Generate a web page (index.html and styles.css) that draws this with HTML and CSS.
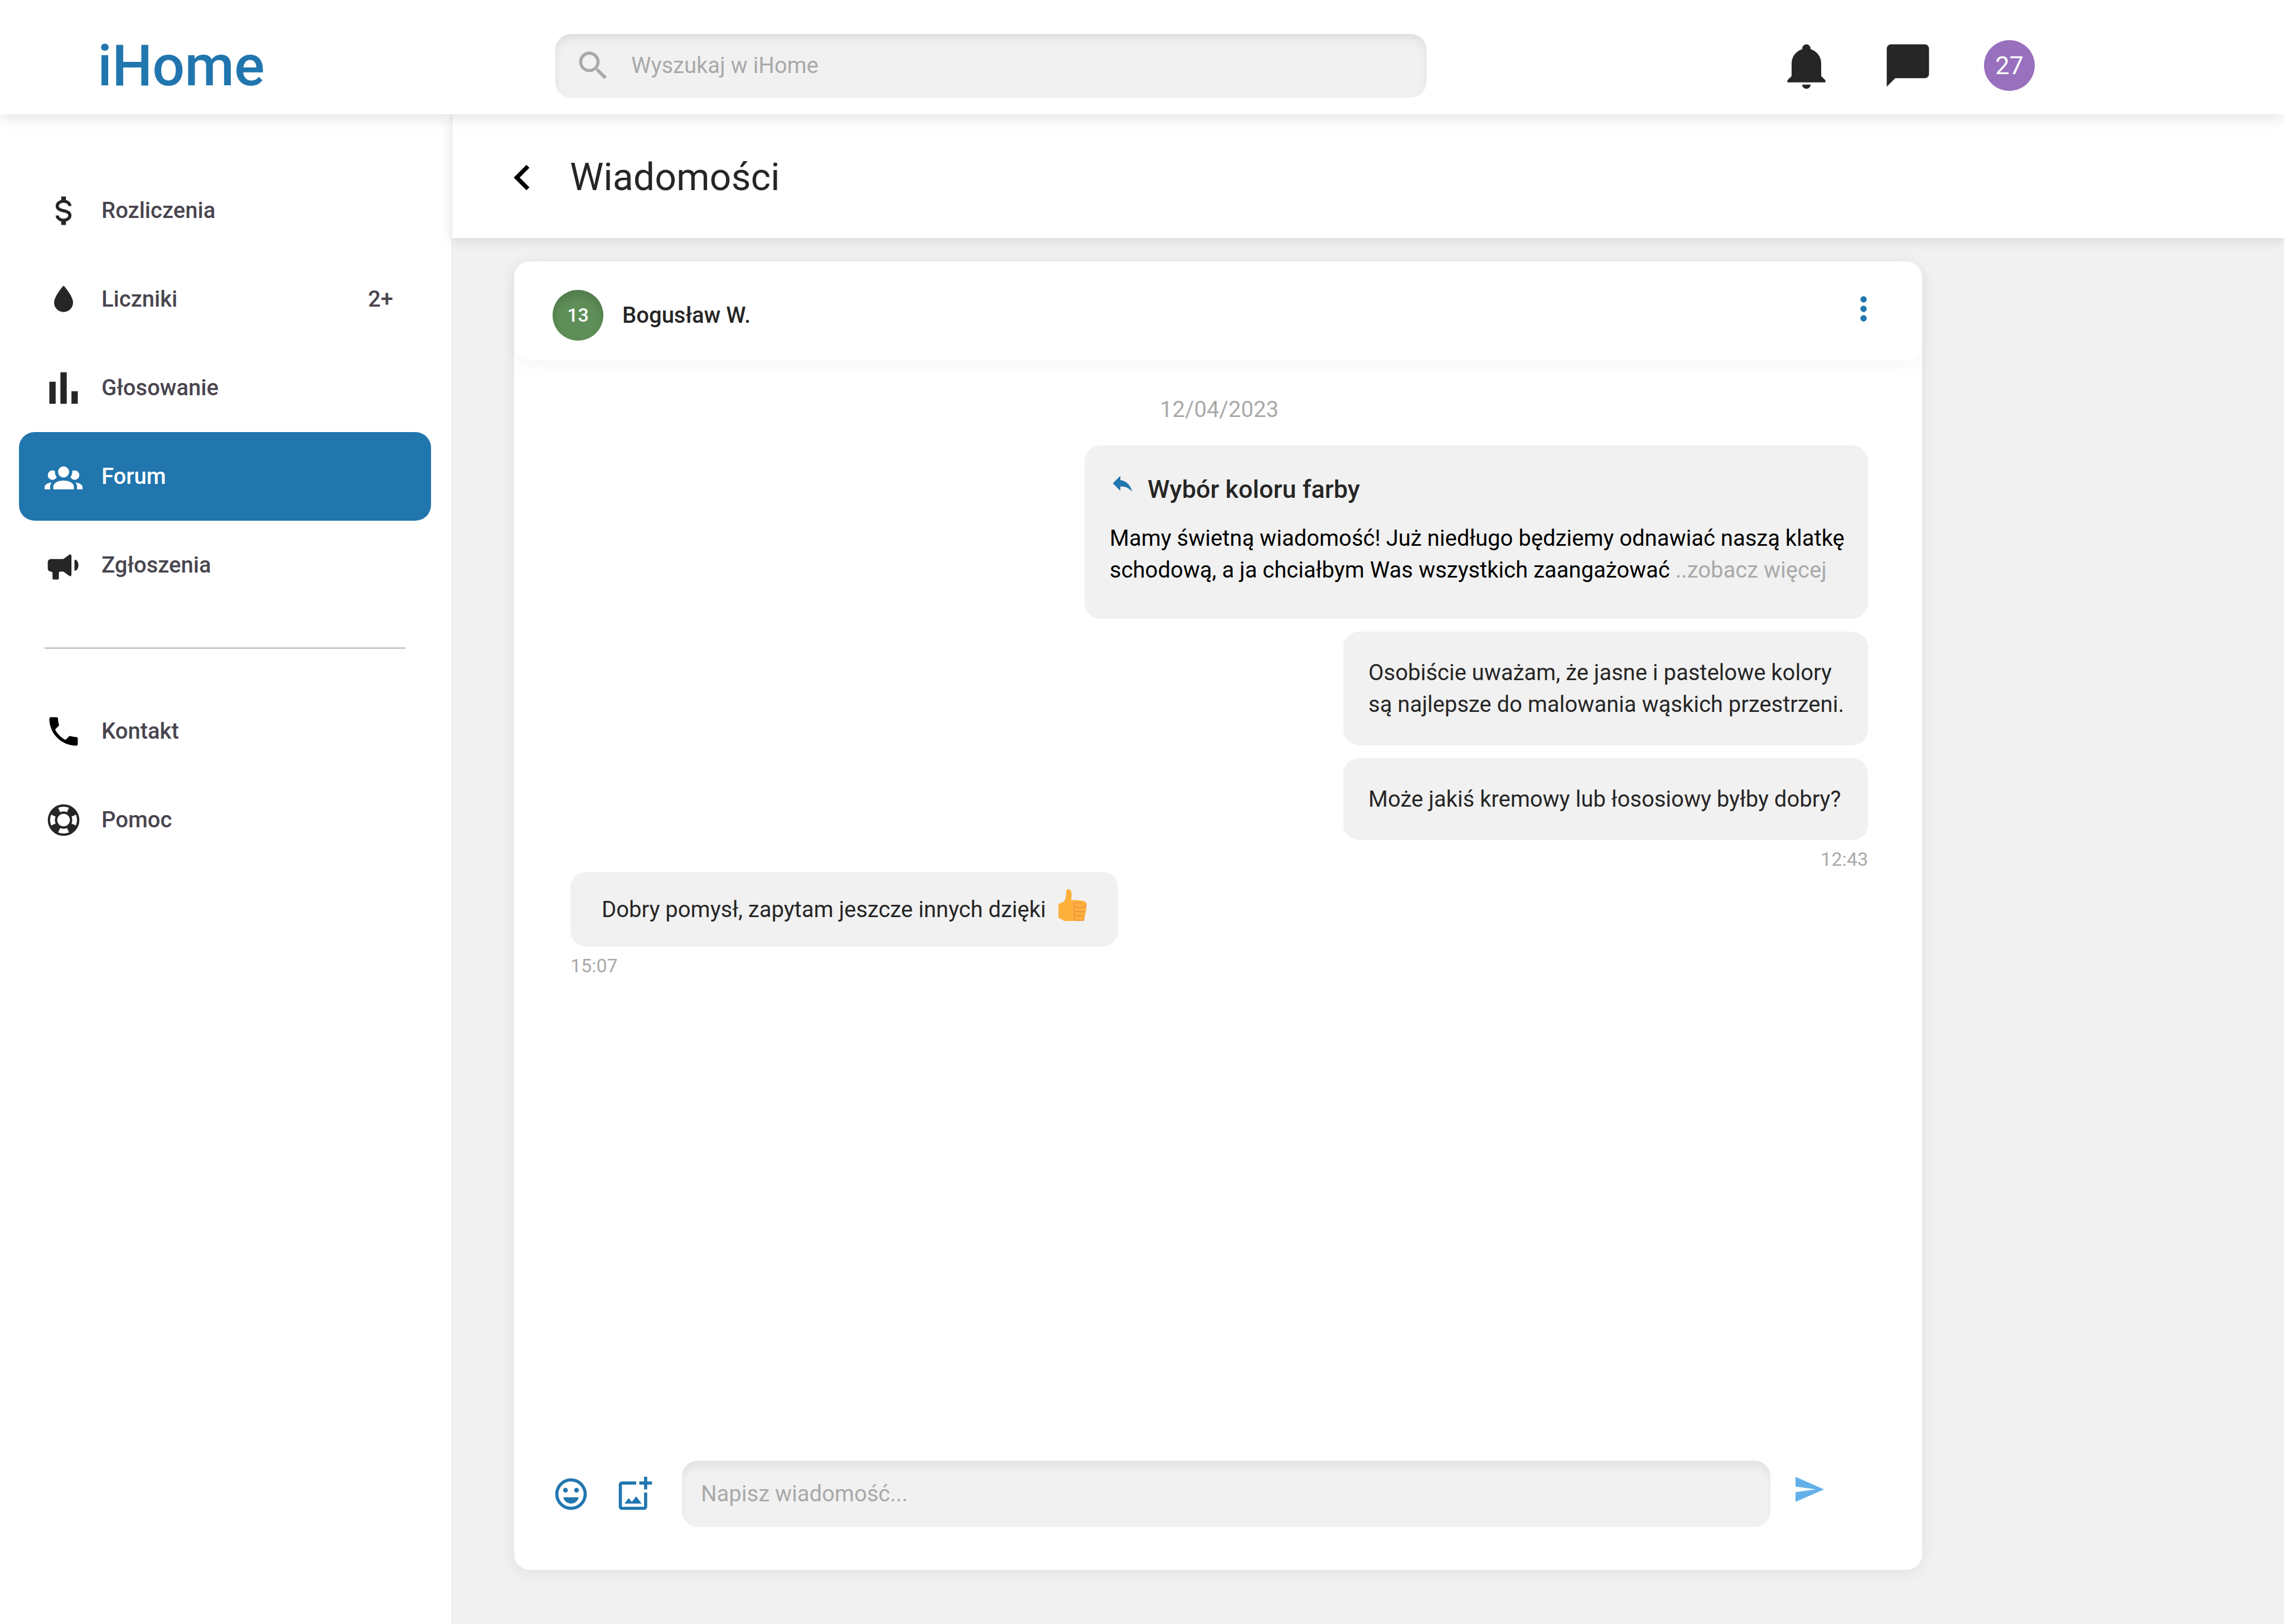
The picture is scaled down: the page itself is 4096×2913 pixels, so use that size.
FILE: index.html
```html
<!DOCTYPE html>
<html lang="pl">
<head>
  <meta charset="utf-8">
  <meta name="viewport" content="width=device-width, initial-scale=1">
  <title>iHome – Wiadomości</title>
  <link rel="stylesheet" href="styles.css">
</head>
<body>
  <header class="topbar">
    <a class="logo" href="#">iHome</a>
    <form class="search" role="search">
      <svg class="icon" viewBox="0 0 24 24" aria-hidden="true"><path d="M15.5 14h-.79l-.28-.27A6.47 6.47 0 0 0 16 9.5 6.5 6.5 0 1 0 9.5 16c1.61 0 3.09-.59 4.23-1.57l.27.28v.79l5 4.99L20.49 19l-4.99-5zm-6 0a4.5 4.5 0 1 1 0-9 4.5 4.5 0 0 1 0 9z"/></svg>
      <input class="search-input" type="search" aria-label="Wyszukaj w iHome" placeholder="Wyszukaj w iHome">
    </form>
    <div class="topbar-actions">
      <button class="icon-button" type="button" aria-label="Powiadomienia">
        <svg class="icon icon-large" viewBox="0 0 24 24" aria-hidden="true"><path d="M21 19v1H3v-1l2-2v-6c0-3.1 2.03-5.83 5-6.71V4a2 2 0 0 1 4 0v.29c2.97.88 5 3.61 5 6.71v6l2 2m-7 2a2 2 0 0 1-4 0"/></svg>
      </button>
      <button class="icon-button" type="button" aria-label="Wiadomości">
        <svg class="icon icon-large" viewBox="0 0 24 24" aria-hidden="true"><path d="M20 2H4a2 2 0 0 0-2 2v18l4-4h14a2 2 0 0 0 2-2V4a2 2 0 0 0-2-2z"/></svg>
      </button>
      <button class="avatar avatar-user" type="button" aria-label="Profil, lokal 27">27</button>
    </div>
  </header>

  <div class="layout">
    <nav class="sidebar" aria-label="Menu główne">
      <a class="nav-item" href="#">
        <svg class="icon" viewBox="0 0 24 24" aria-hidden="true"><path d="M7 15h2c0 1.08 1.37 2 3 2s3-.92 3-2c0-1.1-1.04-1.5-3.24-2.03C9.64 12.44 7 11.78 7 9c0-1.79 1.47-3.31 3.5-3.82V3h3v2.18C15.53 5.69 17 7.21 17 9h-2c0-1.08-1.37-2-3-2s-3 .92-3 2c0 1.1 1.04 1.5 3.24 2.03C14.36 11.56 17 12.22 17 15c0 1.79-1.47 3.31-3.5 3.82V21h-3v-2.18C8.47 18.31 7 16.79 7 15z"/></svg>
        <span class="nav-label">Rozliczenia</span>
      </a>
      <a class="nav-item" href="#">
        <svg class="icon" viewBox="0 0 24 24" aria-hidden="true"><path d="M12 20a6 6 0 0 1-6-6c0-3.200 3.600-7.900 5.400-10.100a.8.8 0 0 1 1.200 0C14.400 6.100 18 10.800 18 14a6 6 0 0 1-6 6z"/></svg>
        <span class="nav-label">Liczniki</span>
        <span class="nav-badge">2+</span>
      </a>
      <a class="nav-item" href="#">
        <svg class="icon" viewBox="0 0 24 24" aria-hidden="true"><path d="M3 22V8h4v14H3m7 0V2h4v20h-4m7 0v-8h4v8h-4z"/></svg>
        <span class="nav-label">Głosowanie</span>
      </a>
      <a class="nav-item nav-item-active" href="#" aria-current="page">
        <svg class="icon" viewBox="0 0 24 24" aria-hidden="true"><path d="M12 5.500A3.500 3.500 0 0 1 15.500 9 3.500 3.500 0 0 1 12 12.500 3.500 3.500 0 0 1 8.500 9 3.500 3.500 0 0 1 12 5.500M5 8c.56 0 1.080.15 1.530.42-.15 1.430.27 2.850 1.130 3.960C7.160 13.340 6.160 14 5 14a3 3 0 0 1-3-3 3 3 0 0 1 3-3m14 0a3 3 0 0 1 3 3 3 3 0 0 1-3 3c-1.160 0-2.160-.66-2.660-1.620.86-1.110 1.280-2.530 1.130-3.960C17.920 8.150 18.440 8 19 8M5.500 18.250c0-2.070 2.910-3.750 6.500-3.750s6.500 1.680 6.500 3.750V20h-13v-1.750M0 20v-1.500c0-1.390 1.890-2.560 4.450-2.900-.59.68-.95 1.620-.95 2.650V20H0m24 0h-3.500v-1.750c0-1.030-.36-1.970-.95-2.650 2.560.34 4.450 1.510 4.450 2.900V20z"/></svg>
        <span class="nav-label">Forum</span>
      </a>
      <a class="nav-item" href="#">
        <svg class="icon" viewBox="0 0 24 24" aria-hidden="true"><path d="M4 8h7.400c.4 0 .7-.1 1-.3l3.200-2.400A.9.9 0 0 1 17 6v12a.9.9 0 0 1-1.400.7l-3.200-2.400c-.3-.2-.6-.3-1-.3H10a1 1 0 0 0-1 1v3a1 1 0 0 1-1 1H6a1 1 0 0 1-1-1v-3a1 1 0 0 0-1-1 2 2 0 0 1-2-2v-4a2 2 0 0 1 2-2zm15.600.5c1 .4 1.800 1.700 1.800 3.500s-.8 3-1.800 3.400c-.4.1-.7-.1-.7-.5V9c0-.4.3-.6.7-.5z"/></svg>
        <span class="nav-label">Zgłoszenia</span>
      </a>
      <hr class="nav-divider">
      <a class="nav-item" href="#">
        <svg class="icon icon-black" viewBox="0 0 24 24" aria-hidden="true"><path d="M6.620 10.790c1.440 2.830 3.760 5.140 6.590 6.590l2.200-2.200c.27-.27.67-.36 1.020-.24 1.120.37 2.330.57 3.570.57.55 0 1 .45 1 1V20c0 .55-.45 1-1 1-9.390 0-17-7.610-17-17 0-.55.45-1 1-1h3.500c.55 0 1 .45 1 1 0 1.250.2 2.450.57 3.570.11.35.03.74-.25 1.020l-2.200 2.200z"/></svg>
        <span class="nav-label">Kontakt</span>
      </a>
      <a class="nav-item" href="#">
        <svg class="icon" viewBox="0 0 24 24" aria-hidden="true"><path fill-rule="evenodd" d="M19.790 15.410C20.740 13.240 20.740 10.750 19.790 8.590L17.050 9.830C17.650 11.210 17.650 12.780 17.060 14.170L19.790 15.410M15.420 4.210C13.250 3.260 10.760 3.260 8.590 4.210L9.830 6.940C11.220 6.350 12.790 6.350 14.180 6.950L15.420 4.210M4.210 8.580C3.260 10.760 3.260 13.240 4.210 15.420L6.950 14.170C6.350 12.790 6.350 11.210 6.950 9.820L4.210 8.580M8.590 19.790C10.760 20.740 13.250 20.730 15.420 19.780L14.180 17.050C12.800 17.650 11.220 17.650 9.840 17.060L8.590 19.790M12 2A10 10 0 0 1 22 12A10 10 0 0 1 12 22A10 10 0 0 1 2 12A10 10 0 0 1 12 2M12 8A4 4 0 0 0 8 12A4 4 0 0 0 12 16A4 4 0 0 0 16 12A4 4 0 0 0 12 8Z"/></svg>
        <span class="nav-label">Pomoc</span>
      </a>
    </nav>

    <main class="content">
      <div class="page-head">
        <a class="back" href="#" aria-label="Wstecz">
          <svg class="icon icon-large icon-black" viewBox="0 0 24 24" aria-hidden="true"><path d="M15.410 7.410 14 6l-6 6 6 6 1.410-1.410L10.830 12z"/></svg>
        </a>
        <h1 class="page-title">Wiadomości</h1>
      </div>

      <section class="chat" aria-label="Rozmowa z Bogusław W.">
        <header class="chat-head">
          <div class="contact">
            <span class="avatar avatar-contact">13</span>
            <h2 class="contact-name">Bogusław W.</h2>
          </div>
          <button class="icon-button" type="button" aria-label="Więcej opcji">
            <svg class="icon icon-blue" viewBox="0 0 24 24" aria-hidden="true"><circle cx="12" cy="6" r="2"/><circle cx="12" cy="12" r="2"/><circle cx="12" cy="18" r="2"/></svg>
          </button>
        </header>

        <div class="messages">
          <time class="day" datetime="2023-04-12">12/04/2023</time>

          <div class="group group-sent">
            <article class="bubble bubble-quote">
              <h3 class="quote-title">
                <svg class="icon icon-small icon-blue" viewBox="0 0 24 24" aria-hidden="true"><path d="M10 9V5l-7 7 7 7v-4.100c5 0 8.500 1.600 11 5.100-1-5-4-10-11-11z"/></svg>
                Wybór koloru farby
              </h3>
              <p class="quote-text">Mamy świetną wiadomość! Już niedługo będziemy odnawiać naszą klatkę<br>schodową, a ja chciałbym Was wszystkich zaangażować <a class="more" href="#">..zobacz więcej</a></p>
            </article>
            <p class="bubble bubble-text">Osobiście uważam, że jasne i pastelowe kolory<br>są najlepsze do malowania wąskich przestrzeni.</p>
            <p class="bubble bubble-text">Może jakiś kremowy lub łososiowy byłby dobry?</p>
          </div>
          <time class="stamp stamp-sent" datetime="2023-04-12T12:43">12:43</time>

          <div class="group">
            <p class="bubble bubble-received">Dobry pomysł, zapytam jeszcze innych dzięki
              <svg class="thumb" viewBox="0 0 223 321" role="img" aria-label="Kciuk w górę">
                <path fill="#fdb03b" d="M62 14C63 4 70 0 79 0c16 0 26 22 25 46-1 16-3 30-3 41 20-2 60-3 84 4 24 1 38 14 37 30 1 8-2 14-5 18 6 12 4 26-3 33 3 13 1 24-7 31 2 13-1 22-6 28 4 14-3 20-14 20H48c-10-3-14-8-20-12C10 233 0 229 0 217V129c0-13 11-18 22-22 18-5 24-12 29-24 8-17 11-45 11-69z"/>
                <g fill="none" stroke="#ef9645" stroke-width="9" stroke-linecap="round">
                  <path d="M180 107c-20-2-42-4-52 4-10 9-7 24 2 29 22 5 52 4 86 1"/>
                  <path d="M130 141c-12 7-12 26 0 33 20 5 50 4 82 1"/>
                  <path d="M130 175c-10 7-10 25 2 33 20 4 46 2 72 0"/>
                  <path d="M132 209c-10 8-9 26 0 34 20 4 40 3 62 1 6-3 7-11 6-20"/>
                  <path d="M216 120c2 8 0 14-4 18"/>
                </g>
              </svg>
            </p>
          </div>
          <time class="stamp" datetime="2023-04-12T15:07">15:07</time>
        </div>

        <form class="composer">
          <div class="composer-tools">
            <button class="icon-button" type="button" aria-label="Wstaw emotikonę">
              <svg class="icon icon-blue" viewBox="0 0 24 24" aria-hidden="true"><path fill-rule="evenodd" d="M12 2a10 10 0 1 0 0 20 10 10 0 0 0 0-20zm0 2a8 8 0 1 1 0 16 8 8 0 0 1 0-16z"/><circle cx="8.500" cy="9.500" r="1.500"/><circle cx="15.500" cy="9.500" r="1.500"/><path d="M7.100 14h9.800c-.5 2.300-2.500 4-4.900 4s-4.400-1.700-4.900-4z"/></svg>
            </button>
            <button class="icon-button" type="button" aria-label="Dodaj zdjęcie">
              <svg class="icon icon-blue" viewBox="0 0 24 24" aria-hidden="true"><path d="M13 4H4a2 2 0 0 0-2 2v14a2 2 0 0 0 2 2h14a2 2 0 0 0 2-2v-9h-2v9H4V6h9zM18 1h2v3h3v2h-3v3h-2V6h-3V4h3zM5.600 18l2.700-3.400 2 2.300 2.700-3.500 3.500 4.600z"/></svg>
            </button>
          </div>
          <input class="composer-input" type="text" aria-label="Napisz wiadomość" placeholder="Napisz wiadomość...">
          <button class="icon-button" type="submit" aria-label="Wyślij">
            <svg class="send" viewBox="0 0 51 62" aria-hidden="true"><path d="M0 45 51 22.500 0 0v17.500l36.500 5L0 27.500z"/></svg>
          </button>
        </form>
      </section>
    </main>
  </div>
</body>
</html>
```
FILE: styles.css
```css
:root {
  --blue: #2176ae;
  --blue-light: #62b0ea;
  --ink: #262626;
  --label: #49454f;
  --muted: #a9a9a9;
  --surface: #f1f1f1;
  --radius: 28px;
}

*,
*::before,
*::after {
  box-sizing: border-box;
}

body {
  margin: 0;
  min-height: 100vh;
  display: flex;
  flex-direction: column;
  background: #fff;
  color: var(--ink);
  font-family: Roboto, "Liberation Sans", sans-serif;
  font-size: 40px;
  line-height: 57px;
}

h1,
h2,
h3,
p {
  margin: 0;
}

a {
  color: inherit;
  text-decoration: none;
}

button,
input {
  border: 0;
  padding: 0;
  background: none;
  color: inherit;
  font: inherit;
}

input::placeholder {
  color: var(--muted);
  opacity: 1;
}

.icon {
  display: block;
  flex: none;
  width: 68px;
  height: 68px;
  fill: currentColor;
}

.icon-large {
  width: 91px;
  height: 91px;
}

.icon-small {
  width: 46px;
  height: 46px;
}

.icon-black {
  color: #000;
}

.icon-blue {
  color: var(--blue);
}

.icon-button {
  display: block;
  flex: none;
  cursor: pointer;
}

.avatar {
  display: flex;
  flex: none;
  align-items: center;
  justify-content: center;
  width: 91px;
  height: 91px;
  border-radius: 50%;
  color: #fff;
}

/* Top bar */

.topbar {
  position: relative;
  z-index: 1;
  display: flex;
  align-items: center;
  height: 205px;
  padding: 30px 447px 0 175px;
  background: #fff;
  box-shadow: 0 8px 24px rgba(0, 0, 0, 0.1);
}

.logo {
  flex: none;
  width: 821px;
  color: var(--blue);
  font-size: 102px;
  font-weight: 500;
  line-height: 114px;
}

.search {
  display: flex;
  flex: 0 1 1562px;
  align-items: center;
  gap: 34px;
  height: 114px;
  padding: 0 34px;
  border-radius: var(--radius);
  background: var(--surface);
  box-shadow: inset 0 8px 16px rgba(0, 0, 0, 0.08);
  color: var(--muted);
}

.search-input {
  flex: 1;
  min-width: 0;
  height: 57px;
  appearance: none;
}

.topbar-actions {
  display: flex;
  align-items: center;
  gap: 91px;
  margin-left: auto;
}

.avatar-user {
  background: #9870be;
  font-size: 45px;
  cursor: pointer;
}

/* Page frame */

.layout {
  display: grid;
  flex: 1;
  grid-template-columns: 809px minmax(0, 1fr);
}

.sidebar {
  padding: 93px 36px 0 34px;
}

.nav-item {
  display: flex;
  align-items: center;
  gap: 34px;
  height: 159px;
  padding: 0 68px 0 46px;
  border-radius: var(--radius);
  font-weight: 500;
}

.nav-label,
.nav-badge {
  color: var(--label);
}

.nav-badge {
  margin-left: auto;
}

.nav-item-active {
  background: var(--blue);
  color: #fff;
}

.nav-item-active .nav-label {
  color: inherit;
}

.nav-divider {
  height: 3px;
  margin: 68px 46px;
  border: 0;
  background: #c8c8d0;
}

.content {
  display: flex;
  flex-direction: column;
  background: var(--surface);
}

.page-head {
  display: flex;
  align-items: center;
  gap: 40px;
  height: 222px;
  padding: 4px 0 0 80px;
  border-left: 2px solid #ededed;
  background: #fff;
  box-shadow: 0 6px 20px rgba(0, 0, 0, 0.1);
}

.page-title {
  font-size: 68px;
  font-weight: 400;
  line-height: 91px;
}

/* Conversation */

.chat {
  display: flex;
  flex: 1;
  flex-direction: column;
  margin: 42px 649px 97px 113px;
  border-radius: var(--radius);
  background: #fff;
  box-shadow: 0 4px 28px rgba(0, 0, 0, 0.08);
}

.chat-head {
  display: flex;
  align-items: flex-start;
  justify-content: space-between;
  padding: 51px 71px 35px 69px;
  border-radius: var(--radius);
  box-shadow: 0 12px 28px rgba(0, 0, 0, 0.03);
}

.contact {
  display: flex;
  align-items: center;
  gap: 34px;
}

.avatar-contact {
  background: #5f8f58;
  box-shadow: inset 0 10px 16px rgba(0, 0, 0, 0.15);
  font-size: 34px;
  font-weight: 500;
}

.contact-name {
  font-size: 40px;
  font-weight: 500;
}

.messages {
  display: flex;
  flex: 1;
  flex-direction: column;
  align-items: flex-start;
  padding: 60px 97px 60px 101px;
}

.day {
  align-self: center;
  margin-bottom: 36px;
  color: var(--muted);
}

.group {
  display: flex;
  flex-direction: column;
  align-items: flex-start;
  gap: 23px;
}

.group-sent {
  align-self: flex-end;
  align-items: flex-end;
}

.bubble {
  border-radius: var(--radius);
  background: var(--surface);
}

.bubble-quote {
  width: 1405px;
  padding: 45px 0 59px 45px;
  color: #000;
}

.quote-title {
  display: flex;
  gap: 22px;
  margin-bottom: 25px;
  color: var(--ink);
  font-size: 45px;
  font-weight: 500;
  line-height: 68px;
}

.quote-text {
  white-space: nowrap;
}

.more {
  color: var(--muted);
}

.bubble-text {
  width: 941px;
  padding: 45px 0 45px 45px;
  white-space: nowrap;
}

.bubble-received {
  display: flex;
  align-items: center;
  gap: 22px;
  height: 134px;
  padding: 0 56px;
}

.thumb {
  width: 51px;
  height: 73px;
}

.stamp {
  margin-top: 12px;
  color: var(--muted);
  font-size: 34px;
  line-height: 45px;
}

.stamp-sent {
  align-self: flex-end;
}

.composer {
  display: flex;
  align-items: center;
  gap: 45px;
  padding: 0 176px 77px 68px;
}

.composer-tools {
  display: flex;
  gap: 46px;
  padding-right: 6px;
}

.composer-input {
  flex: 1;
  min-width: 0;
  height: 119px;
  padding: 0 34px;
  border-radius: var(--radius);
  background: var(--surface);
  box-shadow: inset 0 12px 12px rgba(0, 0, 0, 0.05);
}

.send {
  display: block;
  width: 51px;
  height: 62px;
  fill: var(--blue-light);
}
```
